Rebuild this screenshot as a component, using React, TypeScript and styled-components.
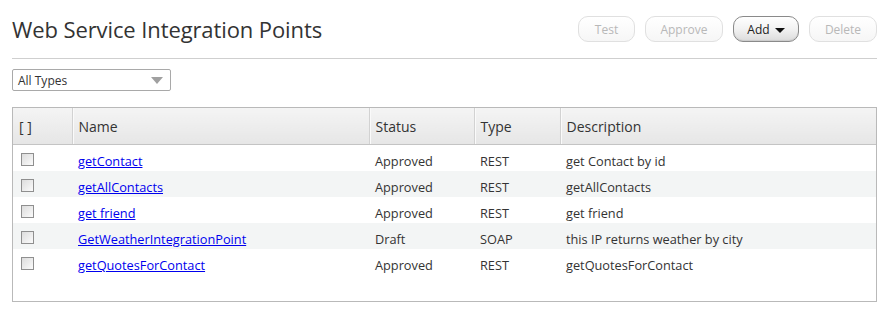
import React from "react";
import styled, { createGlobalStyle } from "styled-components";

const Global = createGlobalStyle`
  html, body { margin: 0; padding: 0; background: #fff; }
  body { font-family: "Open Sans", "Noto Sans", sans-serif; color: #333; }
`;

const Page = styled.div`
  padding: 0 9px 0 12px;
`;

const TopBar = styled.div`
  display: flex;
  align-items: center;
  justify-content: space-between;
  padding: 16px 0 16px;
  border-bottom: 1px solid #cfcfcf;
`;

const Title = styled.h1`
  margin: 0;
  font-size: 22px;
  font-weight: 400;
  color: #333;
  line-height: 26px;
  letter-spacing: -0.1px;
`;

const Actions = styled.div`
  display: flex;
  gap: 10px;
`;

const PillButton = styled.button<{ $active?: boolean; $w: number }>`
  width: ${(p) => p.$w}px;
  height: 26px;
  border-radius: 10px;
  font-family: inherit;
  font-size: 12px;
  padding: 0;
  display: flex;
  align-items: center;
  justify-content: center;
  gap: 5px;
  border: 1px solid ${(p) => (p.$active ? "#8a8a8a" : "#e0e0e0")};
  color: ${(p) => (p.$active ? "#222" : "#b8b8b8")};
  background: ${(p) =>
    p.$active
      ? "linear-gradient(#ffffff, #f2f2f2 50%, #dcdcdc)"
      : "linear-gradient(#ffffff, #f6f6f6)"};
  box-shadow: ${(p) => (p.$active ? "inset 0 -1px 1px rgba(0,0,0,0.08)" : "none")};
`;

const Caret = styled.span`
  width: 0;
  height: 0;
  border-left: 5px solid transparent;
  border-right: 5px solid transparent;
  border-top: 5px solid #111;
  margin-top: 2px;
`;

const Select = styled.div`
  margin-top: 10px;
  height: 20px;
  border: 1px solid #a9a9a9;
  border-radius: 2px;
  display: flex;
  align-items: center;
  justify-content: space-between;
  padding: 0 7px 0 5px;
  box-sizing: content-box;
  width: 145px;
  font-size: 12px;
  color: #333;
`;

const SelectCaret = styled.span`
  width: 0;
  height: 0;
  border-left: 6px solid transparent;
  border-right: 6px solid transparent;
  border-top: 7px solid #a0a0a0;
`;

const TableBox = styled.div`
  margin-top: 16px;
  border: 1px solid #b9b9b9;
  height: 193px;
`;

const Table = styled.table`
  width: 100%;
  border-collapse: collapse;
  table-layout: fixed;
  font-size: 12.75px;
`;

const Col = styled.col<{ $w?: number }>`
  ${(p) => (p.$w ? `width: ${p.$w}px;` : "")}
`;

const Th = styled.th`
  height: 36px;
  padding: 0 0 0 6px;
  text-align: left;
  font-weight: 400;
  font-size: 14px;
  color: #333;
  background: linear-gradient(#f4f4f4, #e6e6e6);
  border-bottom: 1px solid #c4c4c4;
  border-left: 1px solid #d2d2d2;
  box-shadow: inset 1px 0 0 #fafafa;
  &:first-child {
    border-left: none;
    box-shadow: none;
  }
`;

const Tr = styled.tr<{ $alt?: boolean }>`
  background: ${(p) => (p.$alt ? "#f3f5f5" : "#fff")};
`;

const Td = styled.td`
  height: 26px;
  padding: 6px 0 0 6px;
  box-sizing: border-box;
  color: #333;
  vertical-align: middle;
  white-space: nowrap;
`;

const CheckCell = styled.td`
  height: 26px;
  padding: 0 0 0 8px;
  vertical-align: top;
`;

const Check = styled.span`
  display: block;
  margin-top: 8px;
  width: 11px;
  height: 11px;
  border: 1px solid #8f8f8f;
  background: linear-gradient(135deg, #dcdcdc, #fbfbfb);
`;

const Link = styled.a`
  color: #0000ee;
  text-decoration: underline;
`;

const rows = [
  { name: "getContact", status: "Approved", type: "REST", desc: "get Contact by id" },
  { name: "getAllContacts", status: "Approved", type: "REST", desc: "getAllContacts" },
  { name: "get friend", status: "Approved", type: "REST", desc: "get friend" },
  { name: "GetWeatherIntegrationPoint", status: "Draft", type: "SOAP", desc: "this IP returns weather by city" },
  { name: "getQuotesForContact", status: "Approved", type: "REST", desc: "getQuotesForContact" },
];

export default function App() {
  return (
    <Page>
      <Global />
      <TopBar>
        <Title>Web Service Integration Points</Title>
        <Actions>
          <PillButton $w={57}>Test</PillButton>
          <PillButton $w={78}>Approve</PillButton>
          <PillButton $w={66} $active>
            Add <Caret />
          </PillButton>
          <PillButton $w={68}>Delete</PillButton>
        </Actions>
      </TopBar>
      <Select>
        <span>All Types</span>
        <SelectCaret />
      </Select>
      <TableBox>
        <Table>
          <colgroup>
            <Col $w={59} />
            <Col $w={297} />
            <Col $w={105} />
            <Col $w={86} />
            <Col />
          </colgroup>
          <thead>
            <tr>
              <Th>[ ]</Th>
              <Th>Name</Th>
              <Th>Status</Th>
              <Th>Type</Th>
              <Th>Description</Th>
            </tr>
          </thead>
          <tbody>
            {rows.map((r, i) => (
              <Tr key={r.name} $alt={i % 2 === 1}>
                <CheckCell>
                  <Check />
                </CheckCell>
                <Td>
                  <Link href="#">{r.name}</Link>
                </Td>
                <Td>{r.status}</Td>
                <Td>{r.type}</Td>
                <Td>{r.desc}</Td>
              </Tr>
            ))}
          </tbody>
        </Table>
      </TableBox>
    </Page>
  );
}
